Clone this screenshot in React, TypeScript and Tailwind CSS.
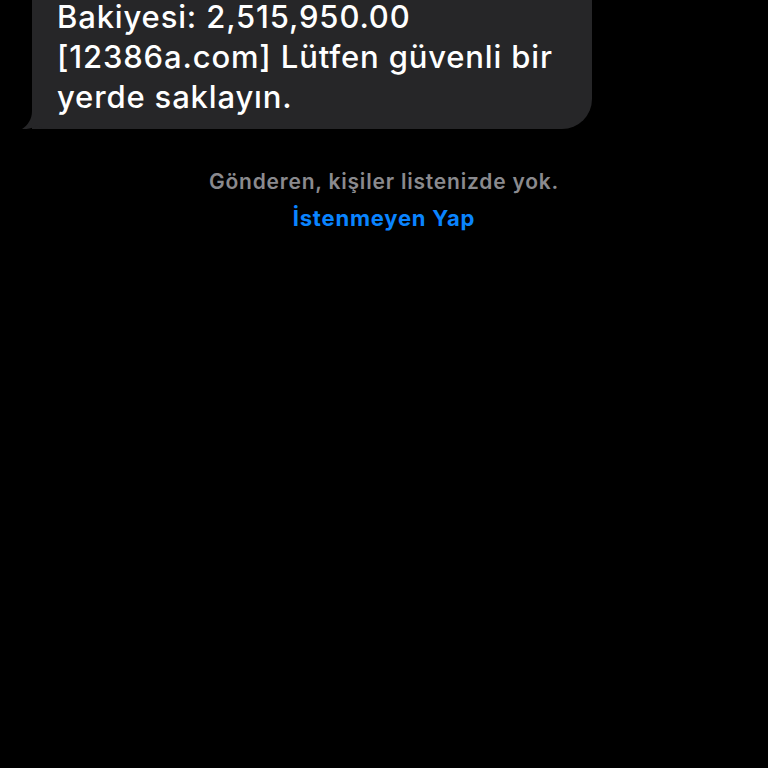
export default function App() {
  return (
    <div
      className="min-h-screen w-full bg-black overflow-hidden"
      style={{ fontFamily: 'Inter, "Noto Sans", "Liberation Sans", sans-serif' }}
    >
      <div className="pt-0">
        <div className="relative ml-[32px] w-[560px] -mt-[3px] rounded-br-[30px] bg-[#262628] pl-[25px] pr-4 pb-[12px]">
          <p className="text-[31px] leading-[40px] font-medium text-white tracking-[0.85px]">
            Bakiyesi: 2,515,950.00
            <br />
            [12386a.com] Lütfen güvenli bir
            <br />
            yerde saklayın.
          </p>
          <svg
            className="absolute -left-[10px] bottom-0"
            width="26"
            height="18"
            viewBox="0 0 26 18"
          >
            <path
              d="M10 0 C10 8 6 14 0 18 C6 18.5 11 17 15 14 C18 16.5 21 18 26 18 L26 0 Z"
              fill="#262628"
            />
          </svg>
        </div>
      </div>

      <div className="mt-[40px] flex flex-col items-center">
        <p className="text-[21px] leading-[26px] font-semibold text-[#8a8a8e] tracking-[0.8px]">
          Gönderen, kişiler listenizde yok.
        </p>
        <button className="mt-[10px] text-[22px] leading-[26px] font-bold text-[#0a84ff] tracking-[0.8px]">
          İstenmeyen Yap
        </button>
      </div>
    </div>
  );
}
